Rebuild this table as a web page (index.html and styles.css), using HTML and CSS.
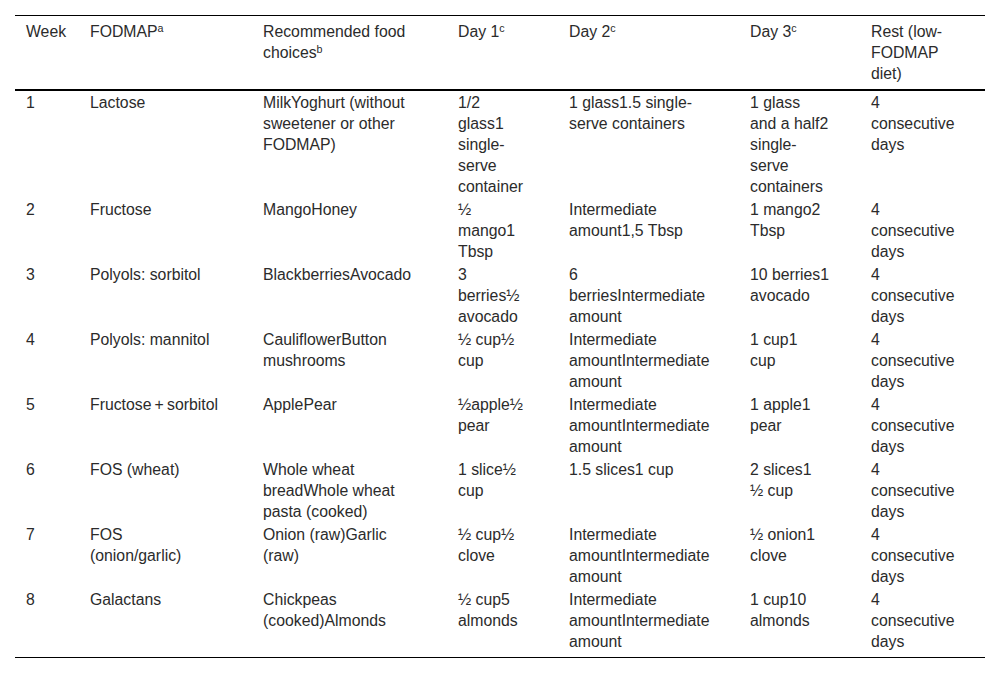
FILE: index.html
```html
<!DOCTYPE html>
<html>
<head>
<meta charset="utf-8">
<link rel="stylesheet" href="styles.css">
</head>
<body>
<table class="fodmap">
  <colgroup>
    <col class="c-week"><col class="c-fodmap"><col class="c-rec"><col class="c-d1"><col class="c-d2"><col class="c-d3"><col class="c-rest">
  </colgroup>
  <thead>
    <tr>
      <th>Week</th>
      <th>FODMAP<sup>a</sup></th>
      <th>Recommended food<br>choices<sup>b</sup></th>
      <th>Day 1<sup>c</sup></th>
      <th>Day 2<sup>c</sup></th>
      <th>Day 3<sup>c</sup></th>
      <th>Rest (low-<br>FODMAP<br>diet)</th>
    </tr>
  </thead>
  <tbody>
    <tr>
      <td>1</td>
      <td>Lactose</td>
      <td>MilkYoghurt (without<br>sweetener or other<br>FODMAP)</td>
      <td>1/2<br>glass1<br>single-<br>serve<br>container</td>
      <td>1 glass1.5 single-<br>serve containers</td>
      <td>1 glass<br>and a half2<br>single-<br>serve<br>containers</td>
      <td>4<br>consecutive<br>days</td>
    </tr>
    <tr>
      <td>2</td>
      <td>Fructose</td>
      <td>MangoHoney</td>
      <td>½<br>mango1<br>Tbsp</td>
      <td>Intermediate<br>amount1,5 Tbsp</td>
      <td>1 mango2<br>Tbsp</td>
      <td>4<br>consecutive<br>days</td>
    </tr>
    <tr>
      <td>3</td>
      <td>Polyols: sorbitol</td>
      <td>BlackberriesAvocado</td>
      <td>3<br>berries½<br>avocado</td>
      <td>6<br>berriesIntermediate<br>amount</td>
      <td>10 berries1<br>avocado</td>
      <td>4<br>consecutive<br>days</td>
    </tr>
    <tr>
      <td>4</td>
      <td>Polyols: mannitol</td>
      <td>CauliflowerButton<br>mushrooms</td>
      <td>½ cup½<br>cup</td>
      <td>Intermediate<br>amountIntermediate<br>amount</td>
      <td>1 cup1<br>cup</td>
      <td>4<br>consecutive<br>days</td>
    </tr>
    <tr>
      <td>5</td>
      <td>Fructose&#8201;+&#8201;sorbitol</td>
      <td>ApplePear</td>
      <td>½apple½<br>pear</td>
      <td>Intermediate<br>amountIntermediate<br>amount</td>
      <td>1 apple1<br>pear</td>
      <td>4<br>consecutive<br>days</td>
    </tr>
    <tr>
      <td>6</td>
      <td>FOS (wheat)</td>
      <td>Whole wheat<br>breadWhole wheat<br>pasta (cooked)</td>
      <td>1 slice½<br>cup</td>
      <td>1.5 slices1 cup</td>
      <td>2 slices1<br>½ cup</td>
      <td>4<br>consecutive<br>days</td>
    </tr>
    <tr>
      <td>7</td>
      <td>FOS<br>(onion/garlic)</td>
      <td>Onion (raw)Garlic<br>(raw)</td>
      <td>½ cup½<br>clove</td>
      <td>Intermediate<br>amountIntermediate<br>amount</td>
      <td>½ onion1<br>clove</td>
      <td>4<br>consecutive<br>days</td>
    </tr>
    <tr class="last">
      <td>8</td>
      <td>Galactans</td>
      <td>Chickpeas<br>(cooked)Almonds</td>
      <td>½ cup5<br>almonds</td>
      <td>Intermediate<br>amountIntermediate<br>amount</td>
      <td>1 cup10<br>almonds</td>
      <td>4<br>consecutive<br>days</td>
    </tr>
  </tbody>
</table>
</body>
</html>
```

FILE: styles.css
```css
html, body {
  margin: 0;
  padding: 0;
  background: #ffffff;
}

body {
  font-family: "Liberation Sans", Arial, sans-serif;
  font-size: 15.8px;
  line-height: 21px;
  color: #2b2b2b;
}

.fodmap {
  margin: 15px 15px 0 15px;
  width: 970px;
  table-layout: fixed;
  border-collapse: separate;
  border-spacing: 0;
}

.c-week { width: 64px; }
.c-fodmap { width: 173px; }
.c-rec { width: 195px; }
.c-d1 { width: 111px; }
.c-d2 { width: 181px; }
.c-d3 { width: 121px; }
.c-rest { width: 125px; }

.fodmap th,
.fodmap td {
  text-align: left;
  vertical-align: top;
  white-space: nowrap;
  font-weight: normal;
  padding: 1px 0 1px 11px;
}

.fodmap th {
  padding-top: 5px;
  padding-bottom: 5px;
  border-top: 1px solid #000000;
  border-bottom: 2px solid #000000;
}

.fodmap tr.last td {
  padding-bottom: 5px;
  border-bottom: 1px solid #000000;
}

.fodmap sup {
  font-size: 0.68em;
  line-height: 0;
  vertical-align: 0.5em;
}
```
